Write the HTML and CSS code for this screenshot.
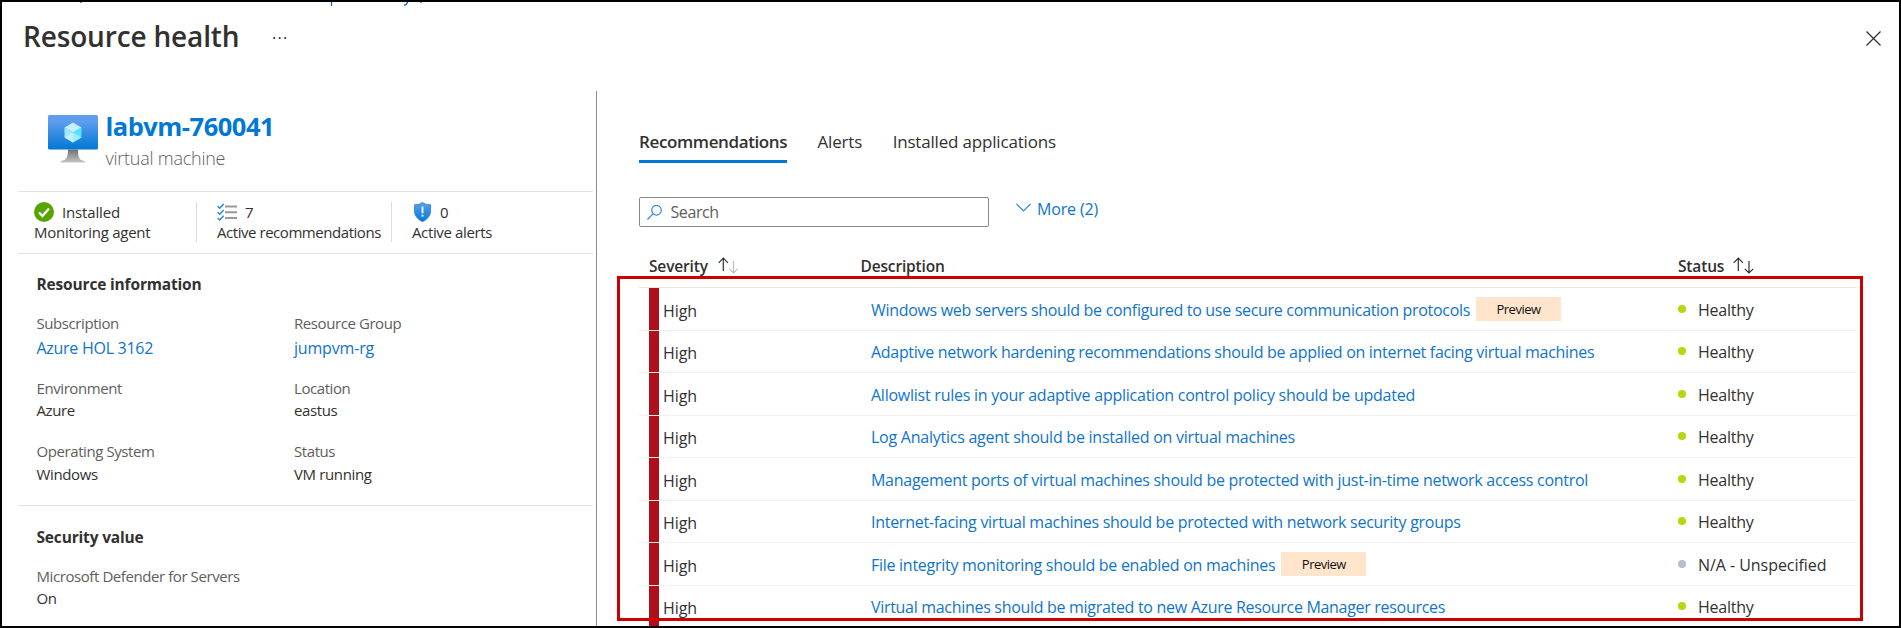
FILE: index.html
```html
<!DOCTYPE html>
<html lang="en">
<head>
<meta charset="utf-8">
<title>Resource health</title>
<link rel="stylesheet" href="styles.css">
</head>
<body>
<div class="frame">
  <svg class="crumb-edge" width="345" height="4" viewBox="0 0 345 4" aria-hidden="true">
    <path d="M0 .5h2M340 .5h2" stroke="#8a8a8a"/>
    <path d="M251.500 0v4M327.500 0q-.5 3-3.500 3.300" stroke="#0f6cbd" stroke-width="1.300" fill="none"/>
  </svg>
  <header class="header">
    <h1 class="title">Resource health</h1>
    <svg class="dots" width="16" height="4" viewBox="0 0 16 4" fill="#323130"><circle cx="2.200" cy="2" r="1.100"/><circle cx="7.700" cy="2" r="1.100"/><circle cx="13.200" cy="2" r="1.100"/></svg>
    <svg class="close" width="15" height="15" viewBox="0 0 15 15" stroke="#323130" stroke-width="1.300"><path d="M.5.5l14 14M14.500.5l-14 14"/></svg>
  </header>
  <main class="main">
    <aside class="side">
      <section class="resource">
        <svg width="50" height="48" viewBox="0 0 50 48">
          <defs>
            <linearGradient id="screen" x1="0" y1="0" x2="0" y2="1"><stop offset=".18" stop-color="#5e9df0"/><stop offset="1" stop-color="#0078d4"/></linearGradient>
            <linearGradient id="stand" x1="0" y1="0" x2="0" y2="1"><stop offset="0" stop-color="#707070"/><stop offset="1" stop-color="#c4c4c4"/></linearGradient>
          </defs>
          <rect width="50" height="34.500" rx="1.500" fill="url(#screen)"/>
          <path d="M20 34.500h10c0 7 1 10.500 5.500 11.200 1 .3 1.500.8 1.500 1.800H12.500c0-1 .5-1.500 1.500-1.800C18.500 45 20 41.500 20 34.500z" fill="url(#stand)"/>
          <path d="M25 7.500l8.500 5L25 17.500l-8.500-5z" fill="#c3f1ff"/>
          <path d="M16.500 12.500l8.500 5v10l-8.500-5z" fill="#9cebff"/>
          <path d="M33.500 12.500l-8.500 5v10l8.500-5z" fill="#50e6ff"/>
          <path d="M16.500 22.500l8.500-5v10z" fill="#c3f1ff"/>
          <path d="M33.500 22.500l-8.500-5v10z" fill="#9cebff"/>
        </svg>
        <div class="resource-text">
          <div class="resource-name">labvm-760041</div>
          <div class="resource-type">virtual machine</div>
        </div>
      </section>
      <section class="stats">
        <div class="stat stat-agent">
          <div class="stat-value">
            <svg width="20" height="20" viewBox="0 0 20 20"><circle cx="10" cy="10" r="10" fill="#57a300"/><path d="M5 10.500l3.500 3.500 6.500-7.500" fill="none" stroke="#fff" stroke-width="2.300"/></svg>
            <span>Installed</span>
          </div>
          <div class="stat-label">Monitoring agent</div>
        </div>
        <div class="stat stat-recs">
          <div class="stat-value">
            <svg width="20" height="20" viewBox="0 0 20 20" fill="none"><path d="M8 4.500h12M8 10.300h12M8 16h12" stroke="#999" stroke-width="2"/><path d="M.7 4.200l2 2L6.700 2M.7 10.200l2 2 4-4.200M.7 16l2 2 4-4.200" stroke="#2b88d8" stroke-width="1.500"/></svg>
            <span>7</span>
          </div>
          <div class="stat-label">Active recommendations</div>
        </div>
        <div class="stat stat-alerts">
          <div class="stat-value">
            <svg width="20" height="20" viewBox="0 0 20 20">
              <defs><linearGradient id="shield" x1="0" y1="0" x2="0" y2="1"><stop offset="0" stop-color="#5ea0ef"/><stop offset="1" stop-color="#0078d4"/></linearGradient></defs>
              <path d="M10.500.3c2 1.800 4.500 2.400 8 2.500v6.500c0 5.500-5 9-8 10.500-3-1.500-8-5-8-10.500V2.800c3.500-.1 6-.7 8-2.500z" fill="url(#shield)" stroke="#1a7fd8" stroke-width=".8"/>
              <path d="M10.500 4.500v6.800M10.500 12.800v2" stroke="#fff" stroke-width="1.800"/>
            </svg>
            <span>0</span>
          </div>
          <div class="stat-label">Active alerts</div>
        </div>
      </section>
      <section class="info">
        <h2 class="heading">Resource information</h2>
        <dl class="facts">
          <div class="fact fact-link"><dt>Subscription</dt><dd><a class="link">Azure HOL 3162</a></dd></div>
          <div class="fact fact-link"><dt>Resource Group</dt><dd><a class="link link-wide">jumpvm-rg</a></dd></div>
          <div class="fact fact-env"><dt>Environment</dt><dd>Azure</dd></div>
          <div class="fact fact-env"><dt>Location</dt><dd>eastus</dd></div>
          <div class="fact"><dt>Operating System</dt><dd>Windows</dd></div>
          <div class="fact"><dt>Status</dt><dd>VM running</dd></div>
        </dl>
      </section>
      <section class="security">
        <h2 class="heading">Security value</h2>
        <dl class="facts">
          <div class="fact fact-env fact-wide"><dt>Microsoft Defender for Servers</dt><dd>On</dd></div>
        </dl>
      </section>
    </aside>
    <section class="content">
      <nav class="tabs">
        <a class="tab tab-active">Recommendations</a>
        <a class="tab">Alerts</a>
        <a class="tab">Installed applications</a>
      </nav>
      <div class="filters">
        <div class="search">
          <svg width="15" height="15" viewBox="0 0 15 15" fill="none" stroke="#2b88d8" stroke-width="1.200"><circle cx="9.500" cy="5.300" r="4.800"/><path d="M6 8.800L.4 14.500"/></svg>
          <span>Search</span>
        </div>
        <a class="more"><svg width="15" height="9" viewBox="0 0 15 9" fill="none" stroke="#2b88d8" stroke-width="1.200"><path d="M.5.8l7 7 7-7"/></svg><span>More (2)</span></a>
      </div>
      <div class="grid-head">
        <div class="head-cell">Severity
          <svg width="20" height="17" viewBox="0 0 20 17" fill="none" stroke-width="1.200"><path d="M5.300 14V1.300M.7 5.800l4.600-4.600 4.600 4.600" stroke="#323130"/><path d="M15.500 4v12M11.300 11.800l4.200 4.200 4.200-4.200" stroke="#bdbdbd"/></svg>
        </div>
        <div class="head-cell">Description</div>
        <div class="head-cell head-status">Status
          <svg width="21" height="17" viewBox="0 0 21 17" fill="none" stroke="#323130" stroke-width="1.200"><path d="M5.300 14V1.300M.7 5.800l4.600-4.600 4.600 4.600M16 4v12M11.800 11.800l4.200 4.200 4.200-4.200"/></svg>
        </div>
      </div>
      <div class="rows">
        <div class="row"><span class="bar"></span><span class="severity">High</span><div class="desc"><a class="link tight">Windows web servers should be configured to use secure communication protocols</a><span class="badge">Preview</span></div><div class="status"><i class="dot"></i>Healthy</div></div>
        <div class="row"><span class="bar"></span><span class="severity">High</span><div class="desc"><a class="link tight">Adaptive network hardening recommendations should be applied on internet facing virtual machines</a></div><div class="status"><i class="dot"></i>Healthy</div></div>
        <div class="row"><span class="bar"></span><span class="severity">High</span><div class="desc"><a class="link loose">Allowlist rules in your adaptive application control policy should be updated</a></div><div class="status"><i class="dot"></i>Healthy</div></div>
        <div class="row"><span class="bar"></span><span class="severity">High</span><div class="desc"><a class="link loose">Log Analytics agent should be installed on virtual machines</a></div><div class="status"><i class="dot"></i>Healthy</div></div>
        <div class="row"><span class="bar"></span><span class="severity">High</span><div class="desc"><a class="link">Management ports of virtual machines should be protected with just-in-time network access control</a></div><div class="status"><i class="dot"></i>Healthy</div></div>
        <div class="row"><span class="bar"></span><span class="severity">High</span><div class="desc"><a class="link">Internet-facing virtual machines should be protected with network security groups</a></div><div class="status"><i class="dot"></i>Healthy</div></div>
        <div class="row"><span class="bar"></span><span class="severity">High</span><div class="desc"><a class="link">File integrity monitoring should be enabled on machines</a><span class="badge">Preview</span></div><div class="status status-na"><i class="dot"></i>N/A - Unspecified</div></div>
        <div class="row"><span class="bar"></span><span class="severity">High</span><div class="desc"><a class="link tight">Virtual machines should be migrated to new Azure Resource Manager resources</a></div><div class="status"><i class="dot"></i>Healthy</div></div>
      </div>
    </section>
  </main>
  <div class="highlight"></div>
</div>
</body>
</html>
```
FILE: styles.css
```css
* { box-sizing: border-box; }

body {
  margin: 0;
  background: #fff;
  color: #323130;
  font: 15px/20px "Open Sans", "Noto Sans", sans-serif;
  letter-spacing: -0.37px;
}

h1, h2, dl, dd { margin: 0; }
svg { display: block; flex: none; }

.frame {
  position: relative;
  display: flex;
  flex-direction: column;
  width: 1901px;
  height: 628px;
  border: 2px solid #000;
  overflow: hidden;
}

/* Descenders of the breadcrumb scrolled out above the panel */
.crumb-edge { position: absolute; left: 78px; top: 0; }

.header {
  display: flex;
  flex: none;
  height: 89px;
  padding: 16px 18px 0 21px;
}
.title {
  font-size: 28px;
  font-weight: 600;
  line-height: 36px;
  letter-spacing: -0.16px;
  width: 249px;
  white-space: nowrap;
}
.dots { margin-top: 18px; }
.close { margin: 13px 0 0 auto; }

.main { display: flex; flex: 1; min-height: 0; }

.side {
  flex: none;
  width: 595px;
  padding: 0 3px 0 16px;
  border-right: 1px solid #8a8a8a;
}

.resource {
  display: flex;
  height: 101px;
  padding: 24px 0 0 30px;
  border-bottom: 1px solid #e1e1e1;
}
.resource-text { margin: -5px 0 0 7.500px; line-height: 32px; }
.resource-name {
  color: #0078d4;
  font-size: 25.500px;
  font-weight: 700;
  letter-spacing: -0.5px;
}
.resource-type {
  color: #605e5c;
  font-size: 18px;
  font-weight: 300;
  letter-spacing: -0.25px;
}

.stats {
  display: flex;
  height: 62px;
  padding: 10px 0 0 16px;
  border-bottom: 1px solid #e1e1e1;
}
.stat { height: 40px; white-space: nowrap; }
.stat-value { display: flex; gap: 8px; letter-spacing: -0.15px; }
.stat-agent { width: 163px; border-right: 1px solid #dcdcdc; }
.stat-agent .stat-label { letter-spacing: -0.26px; }
.stat-recs { width: 195px; padding-left: 20px; border-right: 1px solid #dcdcdc; }
.stat-recs .stat-label { letter-spacing: -0.45px; }
.stat-alerts { padding-left: 20px; }

.heading {
  font-size: 15.500px;
  font-weight: 700;
  line-height: 20px;
  letter-spacing: -0.17px;
}
.info {
  height: 252px;
  padding: 20px 0 0 18.500px;
  border-bottom: 1px solid #e1e1e1;
}
.security { padding: 21px 0 0 18.500px; }

.facts {
  display: grid;
  grid-template-columns: 257.500px 1fr;
  margin-top: 19px;
}
.fact { display: flex; flex-direction: column; gap: 3px; }
.fact dt { color: #605e5c; letter-spacing: -0.42px; }
.fact-link { gap: 5px; padding-bottom: 20px; }
.fact-env { gap: 2px; padding-bottom: 21px; }
.fact-wide { grid-column: span 2; }

.link {
  color: #0f74cc;
  font-size: 16px;
  letter-spacing: -0.275px;
  white-space: nowrap;
}
.link-wide { letter-spacing: -0.18px; }
.tight { letter-spacing: -0.305px; }
.loose { letter-spacing: -0.245px; }

.content {
  display: flex;
  flex-direction: column;
  width: 1260px;
  padding: 39px 0 0 42px;
  font-size: 16px;
}
.content > * { flex: none; }

.tabs { display: flex; gap: 30.500px; }
.tab {
  padding-bottom: 6px;
  font-size: 17px;
  line-height: 24px;
  letter-spacing: -0.18px;
}
.tab-active {
  width: 148px;
  border-bottom: 3px solid #0078d4;
  font-weight: 600;
  letter-spacing: -0.38px;
}

.filters { display: flex; margin-top: 34px; }
.search {
  display: flex;
  align-items: center;
  gap: 8.500px;
  width: 350px;
  height: 30px;
  padding-left: 7px;
  border: 1px solid #8a8886;
  border-radius: 2px;
  color: #605e5c;
  letter-spacing: -0.4px;
}
.more {
  display: flex;
  gap: 6px;
  margin: 2px 0 0 27px;
  color: #0f74cc;
  letter-spacing: -0.15px;
}
.more svg { margin-top: 4px; }

.grid-head {
  display: grid;
  grid-template-columns: 211.500px 817.500px 1fr;
  height: 60px;
  padding: 29px 0 0 10px;
  font-size: 15.500px;
  font-weight: 600;
  letter-spacing: -0.16px;
}
.head-cell { display: flex; gap: 10px; }
.head-cell svg { margin-top: 1px; }
.head-status { gap: 8.500px; }

.rows { border-top: 1px solid #e6e6e6; }
.row {
  display: grid;
  grid-template-columns: 10px 10px 212px 807px 1fr;
  height: 42px;
  border-bottom: 1px solid #efefef;
}
.row:nth-child(odd) { height: 43px; }
.row > * { padding-top: 11px; }
.row:nth-child(odd) > * { padding-top: 12px; }
.bar { grid-column: 2; background: #ae0f1a; }
.severity {
  position: relative;
  top: 1px;
  padding-left: 4px;
  letter-spacing: -0.1px;
}
.desc { display: flex; align-items: flex-start; }
.badge {
  width: 85px;
  height: 24px;
  margin: -3px 0 0 6px;
  background: #ffe5cc;
  color: #111;
  font-size: 13px;
  line-height: 24px;
  letter-spacing: -0.5px;
  text-align: center;
}
.status { display: flex; letter-spacing: -0.25px; }
.dot {
  width: 8px;
  height: 8px;
  margin: 5px 12px 0 0;
  border-radius: 50%;
  background: #b5d80c;
}
.status-na { letter-spacing: -0.05px; }
.status-na .dot { background: #b8bfc9; }

/* Callout rectangle over the recommendation rows */
.highlight {
  position: absolute;
  left: 615px;
  top: 274px;
  width: 1246px;
  height: 345px;
  border: 3px solid #cc0000;
}
```
